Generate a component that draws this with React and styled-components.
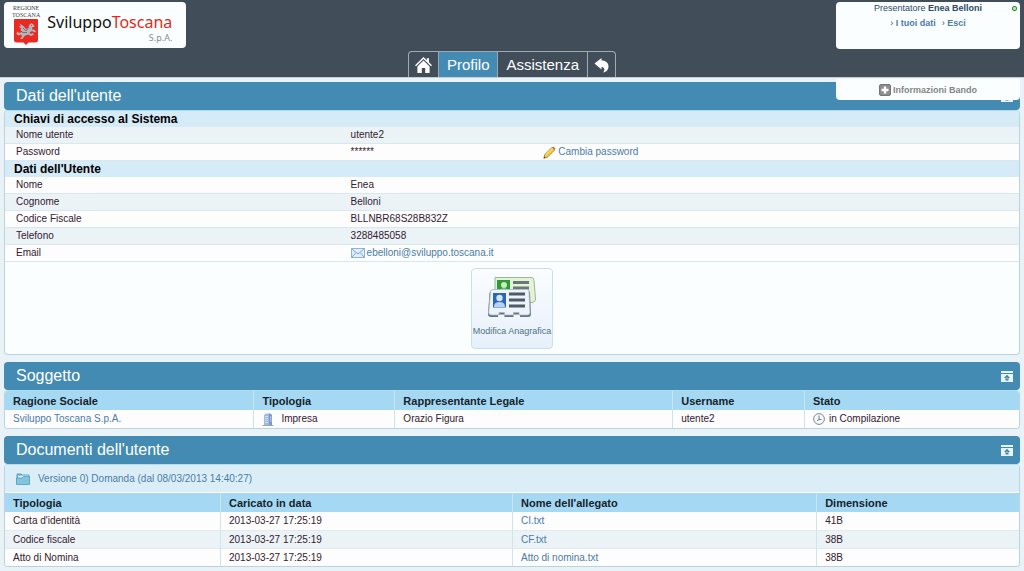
import React from "react";
import styled, { createGlobalStyle, css } from "styled-components";

const fields = [
  { head: "Chiavi di accesso al Sistema" },
  { label: "Nome utente", value: "utente2", alt: true },
  { label: "Password", value: "******", action: "Cambia password" },
  { head: "Dati dell'Utente" },
  { label: "Nome", value: "Enea" },
  { label: "Cognome", value: "Belloni", alt: true },
  { label: "Codice Fiscale", value: "BLLNBR68S28B832Z" },
  { label: "Telefono", value: "3288485058", alt: true },
  { label: "Email", value: "ebelloni@sviluppo.toscana.it", mail: true },
];

const documents = [
  { type: "Carta d'identità", date: "2013-03-27 17:25:19", file: "CI.txt", size: "41B" },
  { type: "Codice fiscale", date: "2013-03-27 17:25:19", file: "CF.txt", size: "38B" },
  { type: "Atto di Nomina", date: "2013-03-27 17:25:19", file: "Atto di nomina.txt", size: "38B" },
];

const HomeIcon = () => (
  <svg width="17" height="16" viewBox="0 0 17 16" fill="#fff" aria-hidden="true">
    <path d="M8.5 0 11.8 3.2V1.2h2.2v4.1L17 8.2l-1 1L8.5 2 1 9.2 0 8.2z" />
    <path d="M8.5 3.6 14.6 9.4V16H10.2V11H6.8V16H2.4V9.4z" />
  </svg>
);

const BackIcon = () => (
  <svg width="15" height="16" viewBox="0 0 15 16" fill="#fff" aria-hidden="true">
    <path d="M.5 6.5 7.5 1V3.5C12 3.5 14.5 6 14.5 9.5C14.5 12.5 12.5 15 9 15.500C11 13.500 11.200 10.500 7.500 10V12.500z" />
  </svg>
);

const PencilIcon = () => (
  <svg width="13" height="13" viewBox="0 0 13 13" aria-hidden="true">
    <path d="M.8 12.2 1.8 8.6 9.200 1.200 11.800 3.800 4.400 11.200z" fill="#f5c93c" stroke="#9a7420" strokeWidth=".8" />
    <path d="M2.600 9 9.500 2.200" stroke="#fff0a0" strokeWidth="1" />
    <path d="M9.200 1.200 10.200 .4 12.500 2.800 11.800 3.800z" fill="#a56a55" />
    <path d="M.8 12.200 1.300 10.400 2.600 11.700z" fill="#4d3a22" />
  </svg>
);

const MailIcon = () => (
  <svg width="14" height="10" viewBox="0 0 14 10" aria-hidden="true">
    <rect x=".5" y=".5" width="13" height="9" fill="#e0effc" stroke="#88b4df" />
    <path d="M1 1 7 6 13 1M1 9 5 4.5M13 9 9 4.5" fill="none" stroke="#79a9da" />
  </svg>
);

const BuildingIcon = () => (
  <svg width="12" height="13" viewBox="0 0 12 13" aria-hidden="true">
    <path d="M2 2 4 .5H8L10 2V12.5H2z" fill="#a3b9dd" />
    <path d="M7 .5H8L10 2V12.5H7z" fill="#7b98cb" />
    <path d="M3 3.5H6M3 5.5H6M3 7.5H6M3 9.500H6M8 4H9.500M8 6H9.500M8 8H9.500" stroke="#cfdcf2" />
    <path d="M.5 12.500H11.500" stroke="#96a6c2" />
  </svg>
);

const ClockIcon = () => (
  <svg width="12" height="12" viewBox="0 0 12 12" fill="none" aria-hidden="true">
    <circle cx="6" cy="6" r="5.4" fill="#f7f8f8" stroke="#7c8990" />
    <path d="M6 2.5V6.5H8.5M6 6.5 4 7.8" stroke="#6a8296" />
  </svg>
);

const FolderIcon = () => (
  <svg width="14" height="12" viewBox="0 0 14 12" aria-hidden="true">
    <path d="M.5 11V1.500Q.5 .5 1.500 .5H5L6.500 1.500H12.500Q13.500 1.500 13.500 2.500V11z" fill="#5ba5c6" />
    <path d="M2 2.500H12.500V6H2z" fill="#d9eff8" />
    <path d="M.5 5H6L7.500 3.500H13.500V11.500H.5z" fill="#83c4df" stroke="#4f9fc2" strokeWidth=".8" />
  </svg>
);

const CollapseIcon = () => (
  <svg width="12" height="12" viewBox="0 0 12 12" aria-hidden="true">
    <path d="M0 1H12V3H0z" fill="#e8f4fb" />
    <path d="M0 4H12V12H0z" fill="#e8f4fb" />
    <path d="M6 4.800 9 8H7.500V10.500H4.500V8H3z" fill="#3f82ad" />
    <path d="M5.500 7.500H6.500V9H5.500z" fill="#e8f4fb" />
  </svg>
);

const PlusIcon = () => (
  <svg width="12" height="12" viewBox="0 0 12 12" aria-hidden="true">
    <rect x=".5" y=".5" width="11" height="11" rx="1.5" fill="#8d8d8d" stroke="#777" />
    <path d="M6 2.5V9.5M2.5 6H9.5" stroke="#fff" strokeWidth="2.4" />
  </svg>
);

const CardsIcon = () => (
  <svg width="50" height="42" viewBox="0 0 50 42" aria-hidden="true">
    <path d="M8 1.5H44Q47 1.5 47 4.5L48.5 23Q48.5 26.5 45 26.5H8z" fill="#e2f3d6" stroke="#9fb596" />
    <path d="M10 4H23V17H10z" fill="#2f9a3c" />
    <circle cx="17" cy="9" r="3" fill="#c5eeb8" />
    <path d="M11.5 17Q12 12.5 17 12.5T22.5 17z" fill="#c5eeb8" />
    <path d="M26 6.5H42M26 12H42" stroke="#6d7777" strokeWidth="2.8" />
    <path d="M5.5 15H41Q43 15 43 17L44 38Q44 41 41 41H33V38.5H26.5V41H17.5V38.5H11V41H4Q1 41 1 38L2.5 17Q2.7 15 5.5 15z" fill="#66727f" />
    <path d="M6 13.5H40Q42 13.5 42 15.5L43 36.5Q43 39 40.5 39H32V36.5H26.5V39H17.5V36.5H12V39H4Q1.5 39 1.7 36.5L3.5 15.5Q3.7 13.5 6 13.5z" fill="#edf3fb" stroke="#a8b5c3" strokeWidth=".8" />
    <path d="M6 17H19V31.5H6z" fill="#2c67b5" />
    <circle cx="12.5" cy="22" r="3.2" fill="#cfe4fb" />
    <path d="M7 31Q7 26 12.5 26T18 31z" fill="#b4d3f5" />
    <path d="M22 18H38M22 24H38M22 30H38" stroke="#4d5a68" strokeWidth="2.8" />
  </svg>
);

const Crest = () => (
  <svg width="24" height="26" viewBox="0 0 24 26" aria-hidden="true">
    <path d="M1 0H23Q24 0 24 1V21Q24 23.5 21 23.5H14.500L12 26 9.500 23.500H3Q0 23.500 0 21V1Q0 0 1 0z" fill="#ea2a20" />
    <path d="M12 10 9.500 7 5.500 4.500 7 7.500 4.500 7 7.500 10 6 11 8.500 12.500 5.500 14 3 12.500 2.500 15 4.500 16.500 7 15.500 8 17.500 6 20H8.500L10.500 17 14 15.500 17 17 20 15.500 18.500 14 17 15 15.500 13.500 18 12 21 13.500 22 12 19.500 10.500 18 10.500 18.500 8 20.500 8 20 6 17.500 4 15.500 5.500 14 9z" fill="#b6b4b8" />
    <path d="M9 9 12 12 15 8M8 13.500 13 13.500M17.500 6V7" fill="none" stroke="#77686e" strokeWidth=".9" />
  </svg>
);

const Panel = ({ title, children }) => (
  <section>
    <TitleBar>
      <h2>{title}</h2>
      <IconButton type="button" aria-label={`Riduci ${title}`}>
        <CollapseIcon />
      </IconButton>
    </TitleBar>
    <PanelBody>{children}</PanelBody>
  </section>
);

const App = () => {
  return (
    <>
      <GlobalStyle />
      <Header>
        <Logo href="#">
          <Region>
            <span>REGIONE</span>
            <span>TOSCANA</span>
            <Crest />
          </Region>
          <Brand>
            <span>
              Sviluppo<em>Toscana</em>
            </span>
            <small>S.p.A.</small>
          </Brand>
        </Logo>
        <Tabs>
          <Tab href="#" aria-label="Home" $icon>
            <HomeIcon />
          </Tab>
          <Tab href="#" $active>
            Profilo
          </Tab>
          <Tab href="#">Assistenza</Tab>
          <Tab href="#" aria-label="Indietro" $icon>
            <BackIcon />
          </Tab>
        </Tabs>
        <UserBox>
          <p>
            Presentatore <b>Enea Belloni</b>
          </p>
          <UserLinks>
            <span>
              › <a href="#">I tuoi dati</a>
            </span>
            <span>
              › <a href="#">Esci</a>
            </span>
          </UserLinks>
          <Online />
        </UserBox>
        <InfoButton type="button">
          <PlusIcon />
          Informazioni Bando
        </InfoButton>
      </Header>

      <Main>
        <Panel title="Dati dell'utente">
          <FieldTable>
            <tbody>
              {fields.map((field) =>
                field.head ? (
                  <tr key={field.head}>
                    <GroupHead colSpan="3">{field.head}</GroupHead>
                  </tr>
                ) : (
                  <FieldRow key={field.label} $alt={field.alt}>
                    <th scope="row">{field.label}</th>
                    <td>
                      {field.mail ? (
                        <IconLink href="#">
                          <MailIcon />
                          {field.value}
                        </IconLink>
                      ) : (
                        field.value
                      )}
                    </td>
                    <td>
                      {field.action && (
                        <IconLink href="#">
                          <PencilIcon />
                          {field.action}
                        </IconLink>
                      )}
                    </td>
                  </FieldRow>
                )
              )}
            </tbody>
          </FieldTable>
          <Actions>
            <EditButton type="button">
              <CardsIcon />
              Modifica Anagrafica
            </EditButton>
          </Actions>
        </Panel>

        <Panel title="Soggetto">
          <DataTable>
            <colgroup>
              <Col $width="24.5%" />
              <Col $width="13.9%" />
              <Col $width="27.4%" />
              <Col $width="13%" />
              <Col />
            </colgroup>
            <thead>
              <tr>
                <th>Ragione Sociale</th>
                <th>Tipologia</th>
                <th>Rappresentante Legale</th>
                <th>Username</th>
                <th>Stato</th>
              </tr>
            </thead>
            <tbody>
              <tr>
                <td>
                  <a href="#">Sviluppo Toscana S.p.A.</a>
                </td>
                <td>
                  <IconText $gap="7px">
                    <BuildingIcon />
                    Impresa
                  </IconText>
                </td>
                <td>Orazio Figura</td>
                <td>utente2</td>
                <td>
                  <IconText $gap="4px">
                    <ClockIcon />
                    in Compilazione
                  </IconText>
                </td>
              </tr>
            </tbody>
          </DataTable>
        </Panel>

        <Panel title="Documenti dell'utente">
          <Version href="#">
            <FolderIcon />
            Versione 0) Domanda (dal 08/03/2013 14:40:27)
          </Version>
          <DataTable>
            <colgroup>
              <Col $width="21.2%" />
              <Col $width="28.8%" />
              <Col $width="30%" />
              <Col />
            </colgroup>
            <thead>
              <tr>
                <th>Tipologia</th>
                <th>Caricato in data</th>
                <th>Nome dell'allegato</th>
                <th>Dimensione</th>
              </tr>
            </thead>
            <tbody>
              {documents.map((doc) => (
                <tr key={doc.file}>
                  <td>{doc.type}</td>
                  <td>{doc.date}</td>
                  <td>
                    <a href="#">{doc.file}</a>
                  </td>
                  <td>{doc.size}</td>
                </tr>
              ))}
            </tbody>
          </DataTable>
        </Panel>
      </Main>
    </>
  );
};

const GlobalStyle = createGlobalStyle`
  * {
    box-sizing: border-box;
  }
  body {
    margin: 0;
    background: #e9f2f6;
    color: #33202f;
    font: 10px/12px "Liberation Sans", Arial, sans-serif;
  }
  h2, p {
    margin: 0;
  }
  a {
    color: #4a7ca6;
    text-decoration: none;
  }
  button {
    font: inherit;
    cursor: pointer;
  }
  svg {
    flex: none;
  }
`;

const card = css`
  background: #fbfeff;
  border-radius: 4px;
`;

const Header = styled.header`
  position: relative;
  display: grid;
  grid-template-columns: 1fr auto 1fr;
  align-items: start;
  height: 78px;
  padding: 2px 4px 0;
  background: #414e5a;
  border-bottom: 1px solid #c3ced5;
`;

const Logo = styled.a`
  ${card}
  display: flex;
  justify-self: start;
  gap: 7px;
  width: 182px;
  height: 46px;
  padding: 3px 8px 0;
`;

const Region = styled.span`
  display: flex;
  flex-direction: column;
  align-items: center;
  color: #444;
  font: 6px/7px "Liberation Serif", serif;
`;

const Brand = styled.span`
  display: flex;
  flex-direction: column;
  color: #111;
  font: 16px/20px "Noto Sans", sans-serif;
  padding-top: 7px;

  em {
    color: #e02a20;
    font-style: normal;
  }
  small {
    align-self: flex-end;
    color: #8b8b8b;
    font-size: 9px;
    line-height: 12px;
  }
`;

const Tabs = styled.nav`
  display: flex;
  align-self: end;
  border: 1px solid #9fabb4;
  border-bottom: 0;
  border-radius: 4px 4px 0 0;
  overflow: hidden;
`;

const Tab = styled.a`
  display: flex;
  align-items: center;
  height: 25px;
  padding: 0 ${(props) => (props.$icon ? "6px" : "8px")};
  background: ${(props) => (props.$active ? "#438bb2" : "transparent")};
  color: #fff;
  font-size: 15px;

  & + & {
    border-left: 1px solid #9fabb4;
  }
`;

const UserBox = styled.div`
  ${card}
  position: relative;
  justify-self: end;
  width: 184px;
  height: 47px;
  color: #2d4a66;
  font-size: 9px;
  text-align: center;
`;

const UserLinks = styled.div`
  display: flex;
  justify-content: center;
  gap: 6px;
  padding-top: 3px;

  a {
    font-weight: bold;
  }
`;

const Online = styled.span`
  position: absolute;
  top: 4px;
  right: 3px;
  width: 5px;
  height: 5px;
  border: 1px solid #2f8a35;
  border-radius: 2px;
  background: #b8e8b0;
`;

const InfoButton = styled.button`
  ${card}
  position: absolute;
  top: 79px;
  right: 4px;
  display: flex;
  align-items: center;
  justify-content: center;
  gap: 2px;
  width: 184px;
  height: 21px;
  padding: 0;
  border: 0;
  border-radius: 0 0 4px 4px;
  color: #858585;
  font-size: 9px;
  font-weight: bold;
`;

const Main = styled.main`
  display: flex;
  flex-direction: column;
  gap: 7px;
  padding: 4px 4px 3px;
`;

const TitleBar = styled.div`
  display: flex;
  align-items: center;
  justify-content: space-between;
  height: 28px;
  padding: 0 7px 0 12px;
  border-radius: 4px;
  background: #438bb2;
  color: #fff;

  h2 {
    font-size: 16px;
    font-weight: normal;
    line-height: 20px;
  }
`;

const IconButton = styled.button`
  display: flex;
  padding: 0;
  border: 0;
  background: none;
`;

const PanelBody = styled.div`
  border: 1px solid #b9d3df;
  border-top-color: #b5dbea;
  border-radius: 4px;
  background: #fafeff;
  overflow: hidden;
`;

const FieldTable = styled.table`
  width: 100%;
  border-spacing: 0;

  th,
  td {
    padding: 0 0 0 11px;
    text-align: left;
  }
`;

const GroupHead = styled.th`
  && {
    height: 16px;
    padding-left: 9px;
    background: #d5ebf7;
    color: #000;
    font-size: 12px;
  }
`;

const FieldRow = styled.tr`
  background: ${(props) => (props.$alt ? "#ecf3f7" : "#fdfdfd")};

  th,
  td {
    height: 17px;
    border-bottom: 1px solid #d9e8ee;
  }
  th {
    width: 33%;
    font-weight: normal;
  }
  td:nth-child(2) {
    width: 19%;
  }
`;

const IconLink = styled.a`
  display: flex;
  align-items: center;
  gap: 2px;
  height: 16px;
`;

const IconText = styled.span`
  display: flex;
  align-items: center;
  gap: ${(props) => props.$gap};
`;

const Actions = styled.div`
  display: flex;
  justify-content: center;
  padding: 6px 5px 5px;
`;

const EditButton = styled.button`
  display: flex;
  flex-direction: column;
  align-items: center;
  gap: 7px;
  height: 81px;
  padding: 7px 1px 0;
  border: 1px solid #cddfea;
  border-radius: 4px;
  background: linear-gradient(#fbfdff, #e6f0fa);
  color: #4f7287;
  font-size: 9px;
`;

const Col = styled.col`
  width: ${(props) => props.$width};
`;

const DataTable = styled.table`
  width: 100%;
  border-spacing: 0;
  table-layout: fixed;

  th,
  td {
    padding: 0 8px;
    text-align: left;
  }
  th + th,
  td + td {
    border-left: 1px solid #cfe3ec;
  }
  th {
    height: 19px;
    background: #a5d9f3;
    color: #17222b;
    font-size: 11px;
  }
  td {
    height: 18px;
    background: #fdfdfd;
  }
  tbody tr:nth-child(even) td {
    background: #ebf3f7;
  }
  tbody tr + tr td {
    border-top: 1px solid #dfebf0;
  }
`;

const Version = styled.a`
  display: flex;
  align-items: center;
  gap: 8px;
  height: 28px;
  padding-left: 11px;
  background: #dbeef8;
  border-bottom: 1px solid #fff;
`;

export default App;
